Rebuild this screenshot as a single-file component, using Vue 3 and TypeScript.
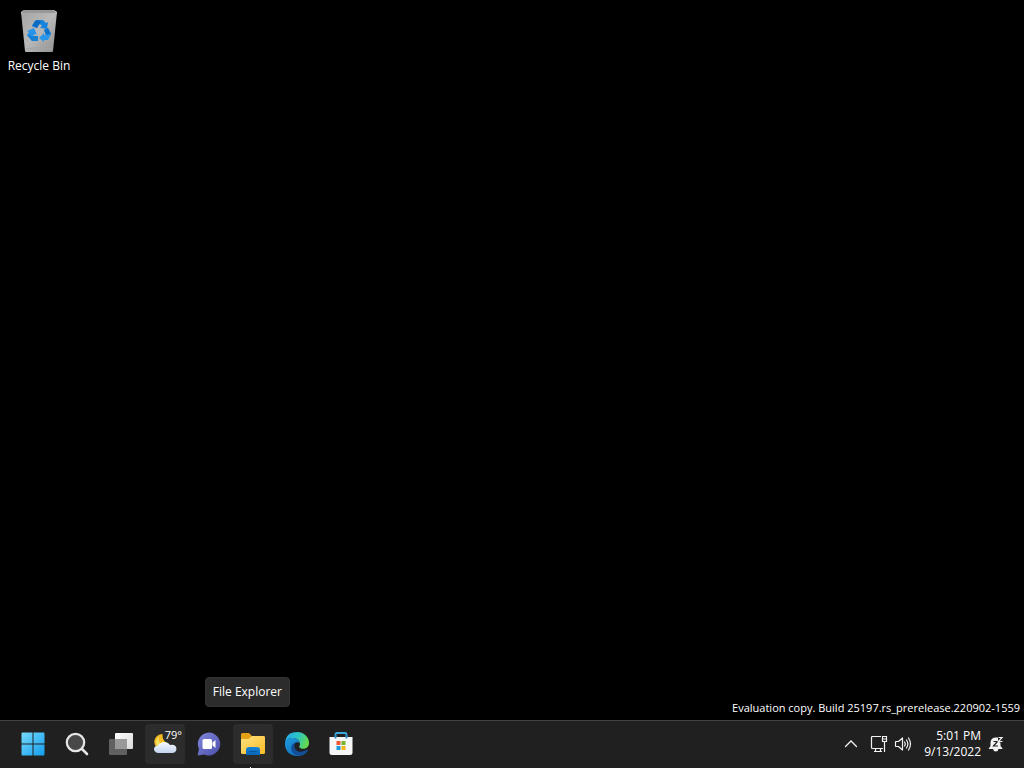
<script setup lang="ts">
const watermark = 'Evaluation copy. Build 25197.rs_prerelease.220902-1559'
const time = '5:01 PM'
const date = '9/13/2022'
</script>

<template>
  <div class="screen">
    <main class="desktop">
      <button class="shortcut" type="button">
        <svg width="40" height="46" viewBox="0 0 40 46" aria-hidden="true">
          <defs>
            <linearGradient id="bin" x1="0" y1="0" x2="1" y2="1">
              <stop offset="0" stop-color="#a4a4a4" />
              <stop offset="0.5" stop-color="#b9b9ba" />
              <stop offset="1" stop-color="#8f8f90" />
            </linearGradient>
          </defs>
          <path d="M2 5 5 3H35L38 5 34 44Q34 45 33 45H7Q6 45 6 44Z" fill="url(#bin)" />
          <path d="M5 3H35L37 6H3Z" fill="#5d5d5e" />
          <path d="M2 5 5 3H35L38 5 37.700 8 36.500 6H3.500L2.300 8Z" fill="#c9c9ca" opacity=".55" />
          <path d="M7 42Q20 39 33 42" fill="none" stroke="#a5a5a5" />
          <path d="M13 19 16 14Q17 13 19 13H24L27 16 29 15 28 22 21 21 23 19 20 16 18 21Z" fill="#1683dc" />
          <path d="M13 19 16 14Q17 13 19 13L22 15 18 21Z" fill="#0a6cc5" />
          <path d="M8 24 15 21 18 28 16 27 14 29H19V34H13L8 28 10 25Z" fill="#2793e9" />
          <path d="M8 28 14 29H19V34H13Z" fill="#1781d5" />
          <path d="M25 23 29 21 32 27 29 33H25V35L20 31 25 26V28H27Z" fill="#2a96ea" />
          <path d="M25 23 29 21 32 27 27 28Z" fill="#0c72cd" />
        </svg>
        <span>Recycle Bin</span>
      </button>
      <p class="watermark">{{ watermark }}</p>
    </main>

    <footer class="taskbar">
      <nav class="apps" aria-label="Taskbar">
        <button class="app" type="button" aria-label="Start">
          <svg width="24" height="24" viewBox="0 0 24 24">
            <defs>
              <linearGradient id="win" gradientUnits="userSpaceOnUse" x1="0" y1="0" x2="24" y2="24">
                <stop offset="0" stop-color="#78dcfb" />
                <stop offset="1" stop-color="#119bed" />
              </linearGradient>
            </defs>
            <path d="M1.500 .5H11.500V11.500H.5V1.500Q.5.5 1.500.5ZM12.500.5H22.500Q23.500.5 23.500 1.500V11.500H12.500ZM.5 12.500H11.500V23.500H1.500Q.5 23.500.5 22.500ZM12.500 12.500H23.500V22.500Q23.500 23.500 22.500 23.500H12.500Z" fill="url(#win)" />
          </svg>
        </button>

        <button class="app" type="button" aria-label="Search">
          <svg width="24" height="24" viewBox="0 0 24 24">
            <circle cx="10.500" cy="10.500" r="8.700" fill="#484848" stroke="#e6e6e6" stroke-width="2.200" />
            <path d="M17 17 22 22" stroke="#e6e6e6" stroke-width="2.600" stroke-linecap="round" />
          </svg>
        </button>

        <button class="app" type="button" aria-label="Task View">
          <svg width="26" height="24" viewBox="0 0 26 24">
            <defs>
              <linearGradient id="pane" x1="0" y1="0" x2="1" y2="1">
                <stop offset="0" stop-color="#fff" />
                <stop offset="1" stop-color="#d9d9d9" />
              </linearGradient>
            </defs>
            <rect x="7" y="1" width="18" height="16" rx="1" fill="url(#pane)" />
            <rect x="1" y="7" width="18" height="16" rx="1" fill="#606060" />
            <path d="M7 7H19V17H7Z" fill="#999" />
          </svg>
        </button>

        <button class="app active" type="button" aria-label="Widgets, 79 degrees">
          <svg width="24" height="22" viewBox="0 0 24 22">
            <defs>
              <linearGradient id="cloud" x1="0" y1="0" x2="0" y2="1">
                <stop offset="0" stop-color="#f7faff" />
                <stop offset="1" stop-color="#c3d4ed" />
              </linearGradient>
            </defs>
            <path d="M9.500 1Q9 8 15 11L11 14H3Q-1 7 4 3Q6.500 1 9.500 1Z" fill="#f3bc22" />
            <path d="M6 4Q5 8 8 11L4 13Q1 7 6 4Z" fill="#f9dc62" />
            <path d="M5 20Q1 19 1 16Q1 13 5 12.500Q7 9 11 9Q15 9 17 12Q23 11 23.500 16Q23 20 19 20Z" fill="url(#cloud)" />
          </svg>
          <span class="temperature">79°</span>
        </button>

        <button class="app" type="button" aria-label="Chat">
          <svg width="24" height="24" viewBox="0 0 24 24">
            <defs>
              <linearGradient id="chat" x1="0" y1="0" x2="1" y2="1">
                <stop offset="0" stop-color="#8288dd" />
                <stop offset="1" stop-color="#4c4eaa" />
              </linearGradient>
            </defs>
            <path d="M12 .5A11.500 11.500 0 1 1 7 22.500L1.500 23.500Q.5 23.500.8 22L2 17A11.500 11.500 0 0 1 12 .5Z" fill="url(#chat)" />
            <rect x="5.500" y="7" width="9.500" height="10" rx="1.500" fill="#fff" />
            <path d="M15.500 10.500 18.500 8V16L15.500 13.500Z" fill="#fff" />
          </svg>
        </button>

        <button class="app active" type="button" aria-describedby="explorer-tip" aria-label="File Explorer">
          <svg width="26" height="24" viewBox="0 0 26 24">
            <defs>
              <linearGradient id="folder" x1="0" y1="0" x2="1" y2="1">
                <stop offset="0" stop-color="#ffe080" />
                <stop offset="1" stop-color="#f8bd26" />
              </linearGradient>
              <linearGradient id="tray" x1="0" y1="0" x2="0" y2="1">
                <stop offset="0" stop-color="#1686dc" />
                <stop offset="1" stop-color="#0864b4" />
              </linearGradient>
            </defs>
            <path d="M1 2.500Q1 1 2.500 1H9L12 4H23.500Q25 4 25 5.500V12H1Z" fill="#e4a116" />
            <path d="M1 7H8.500L12 4H23.500Q25 4 25 5.500V20.500Q25 22 23.500 22H2.500Q1 22 1 20.500Z" fill="url(#folder)" />
            <path d="M6 23V18Q6 15 9 15H17Q20 15 20 18V23Z" fill="url(#tray)" />
            <path d="M9.500 19.500H16.500" stroke="#07549a" stroke-width="1.200" stroke-linecap="round" />
          </svg>
          <span id="explorer-tip" class="tooltip" role="tooltip">File Explorer</span>
          <span class="pointer"></span>
        </button>

        <button class="app" type="button" aria-label="Microsoft Edge">
          <svg width="26" height="26" viewBox="0 0 26 26">
            <defs>
              <linearGradient id="wave" x1="0" y1="0.200" x2="1" y2="0.500">
                <stop offset="0" stop-color="#25a8e8" />
                <stop offset="0.500" stop-color="#2bc5c5" />
                <stop offset="1" stop-color="#66d948" />
              </linearGradient>
              <linearGradient id="swirl" x1="0" y1="0" x2="0.800" y2="1">
                <stop offset="0" stop-color="#1d9de2" />
                <stop offset="1" stop-color="#1268b6" />
              </linearGradient>
            </defs>
            <path d="M1 12Q2 1 13 1C21 1 25 7 25 12C25 18 18 19 15.500 16.500C14.500 15.500 16 15 16 13C16 9 12 7 8 7Q3 7 1 12Z" fill="url(#wave)" />
            <path d="M1 13C1 9 4 7 8 7C12 7 15 9 16 12C13 10 9 12 9 16C9 21 15 24 20 22C22 21.300 23 20 23.500 20C21 24 17 25 13 25C6 25 1 20 1 13Z" fill="url(#swirl)" />
            <path d="M12.500 11.500C9 13 10 19 14.500 20.500C18 21.500 21 19.500 23.500 18.500Q24.500 18.500 23.500 20C19 26 12 25.500 9 22C5 17 8 11.500 12.500 11.500Z" fill="#124f98" />
          </svg>
        </button>

        <button class="app" type="button" aria-label="Microsoft Store">
          <svg width="24" height="26" viewBox="0 0 24 26">
            <path d="M6.500 8V3.500Q6.500 2 8 2H16Q17.500 2 17.500 3.500V8" fill="none" stroke="#39a9e2" stroke-width="1.800" />
            <path d="M.5 6H23.500V21.500Q23.500 24 21 24H3Q.5 24 .5 21.500Z" fill="#f5f6f7" />
            <path d="M6.500 7.500V4M17.500 7.500V4" stroke="#2388bd" stroke-width="1.800" />
            <path d="M7.500 10H11.500V14H7.500Z" fill="#ed5736" />
            <path d="M12.500 10H16.500V14H12.500Z" fill="#78b52c" />
            <path d="M7.500 15H11.500V19H7.500Z" fill="#1b9bd9" />
            <path d="M12.500 15H16.500V19H12.500Z" fill="#f5b51c" />
          </svg>
        </button>
      </nav>

      <div class="tray">
        <button class="tray-button" type="button" aria-label="Show hidden icons">
          <svg width="16" height="16" viewBox="0 0 16 16">
            <path d="M2.500 10.500 8 5 13.500 10.500" fill="none" stroke="#f2f2f2" stroke-width="1.300" stroke-linecap="round" />
          </svg>
        </button>
        <button class="tray-button status" type="button" aria-label="Network and volume">
          <svg width="18" height="18" viewBox="0 0 18 18" fill="none" stroke="#f2f2f2" stroke-width="1.200">
            <path d="M11 1.500H2.500Q1.500 1.500 1.500 2.500V12.500Q1.500 13.500 2.500 13.500H13M5.500 13.500V16.500M10.500 13.500V16.500M4 16.500H12" />
            <path d="M12.500 1.500H16.500V6.500H12.500ZM12.500 4H16.500M14.500 6.500V17" />
          </svg>
          <svg width="18" height="18" viewBox="0 0 18 18" fill="none" stroke="#f2f2f2" stroke-width="1.200" stroke-linecap="round">
            <path d="M1.500 7Q1.500 6.500 2 6.500H4.500L8.500 3V15L4.500 11.500H2Q1.500 11.500 1.500 11Z" stroke-linejoin="round" />
            <path d="M10.500 7Q12 9 10.500 11M12.500 5Q15.200 9 12.500 13M14.500 3Q18.500 9 14.500 15" />
          </svg>
        </button>
        <button class="clock" type="button">
          <span>{{ time }}</span>
          <span>{{ date }}</span>
        </button>
        <button class="tray-button" type="button" aria-label="Notifications, do not disturb">
          <svg width="16" height="16" viewBox="0 0 16 16">
            <path d="M2.500 10V6.500Q3 1.500 8 1.500H10V5L12.500 7V10L14.500 12.500V13H.8V12.500Z" fill="#f4f4f4" />
            <path d="M5 13H10.500Q10 15.500 7.800 15.500Q5.500 15.500 5 13Z" fill="#f4f4f4" />
            <path d="M5.500 5.500H9.500L5.500 10H10" fill="none" stroke="#202020" stroke-width="1.200" />
            <path d="M10.500 1.500H14L10.500 5.500H14.500" fill="none" stroke="#f4f4f4" stroke-width="1.200" />
          </svg>
        </button>
      </div>
    </footer>
  </div>
</template>

<style>
html,
body {
  margin: 0;
  background: #000;
}
</style>

<style scoped>
.screen {
  display: flex;
  flex-direction: column;
  min-height: 100vh;
  overflow: hidden;
  background: #000;
  color: #fff;
  font-family: "Open Sans", "Noto Sans", sans-serif;
  font-size: 12px;
  line-height: 16px;
}

button {
  margin: 0;
  padding: 0;
  border: 0;
  background: none;
  color: inherit;
  font: inherit;
}

svg {
  display: block;
  flex: none;
}

.desktop {
  display: flex;
  flex: 1;
  flex-direction: column;
  justify-content: space-between;
  align-items: flex-start;
}

.shortcut {
  display: flex;
  flex-direction: column;
  align-items: center;
  gap: 5px;
  width: 76px;
  padding-top: 7px;
  margin-left: 1px;
}

.watermark {
  align-self: flex-end;
  margin: 0;
  padding: 0 4px 4px;
  font-size: 11px;
}

.taskbar {
  display: flex;
  justify-content: space-between;
  align-items: center;
  height: 48px;
  box-sizing: border-box;
  padding: 0 20px 1px 13px;
  border-top: 1px solid #414141;
  background: #202020;
}

.apps {
  display: flex;
  gap: 4px;
}

.app {
  position: relative;
  display: flex;
  align-items: center;
  justify-content: center;
  width: 40px;
  height: 40px;
  border-radius: 4px;
}

.active {
  background: #2c2c2c;
}

.temperature {
  position: absolute;
  top: 3px;
  right: 3px;
  font-size: 11px;
}

.tooltip {
  position: absolute;
  bottom: 57px;
  right: -17px;
  box-sizing: border-box;
  padding: 6px 7px;
  border: 1px solid #343434;
  border-radius: 4px;
  background: #2c2c2c;
  white-space: nowrap;
}

.pointer {
  position: absolute;
  left: 17px;
  bottom: -4px;
  width: 1px;
  height: 1px;
  background: #fff;
}

.tray {
  display: flex;
  align-items: center;
}

.status {
  display: flex;
  gap: 6px;
  margin-left: 11px;
}

.clock {
  display: flex;
  flex-direction: column;
  align-items: flex-end;
  margin: 0 7px 0 12px;
}
</style>
